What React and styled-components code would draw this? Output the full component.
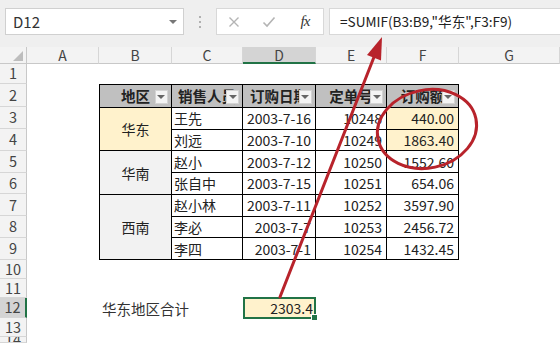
import React from 'react'
import styled, { createGlobalStyle } from 'styled-components'

const GlobalStyle = createGlobalStyle`
  html, body { margin: 0; padding: 0; background: #fff; }
  body {
    width: 560px;
    height: 343px;
    overflow: hidden;
    font-family: "Noto Sans CJK SC", "Open Sans", sans-serif;
  }
`

const GREEN = '#217346'
const RED = '#b8232b'

const Page = styled.div`
  position: relative;
  width: 560px;
  height: 343px;
  overflow: hidden;
  display: flex;
  flex-direction: column;
  background: #fff;
`

// ---------- formula bar ----------
const FormulaBar = styled.div`
  flex: none;
  height: 47px;
  box-sizing: border-box;
  display: flex;
  align-items: flex-start;
  padding: 8px 0 0 5px;
  background: #efefef;
`

const NameBox = styled.div`
  width: 179px;
  height: 27px;
  box-sizing: border-box;
  border: 1px solid #d0d0d0;
  background: #fff;
  display: flex;
  align-items: center;
  justify-content: space-between;
  padding: 0 6px 0 7px;
  font-size: 15px;
  color: #333;
`

const Caret = styled.span`
  width: 0;
  height: 0;
  border-left: 4px solid transparent;
  border-right: 4px solid transparent;
  border-top: 4px solid ${p => p.$color || '#777'};
`

const Dots = styled.div`
  width: 32px;
  height: 27px;
  display: flex;
  flex-direction: column;
  align-items: center;
  justify-content: center;
  gap: 3px;
  span {
    width: 2px;
    height: 2px;
    background: #b0b0b0;
  }
`

const ButtonBox = styled.div`
  width: 108px;
  height: 27px;
  box-sizing: border-box;
  border: 1px solid #d8d8d8;
  background: #fff;
  display: grid;
  grid-template-columns: 34px 35px 38px;
  align-items: center;
  justify-items: center;
`

const Fx = styled.span`
  font-family: "Liberation Serif", serif;
  font-style: italic;
  font-size: 15px;
  color: #333;
  letter-spacing: -1px;
`

const FormulaInput = styled.div`
  flex: 1;
  margin-left: 5px;
  height: 27px;
  box-sizing: border-box;
  border: 1px solid #d8d8d8;
  border-right: none;
  background: #fff;
  padding-left: 10px;
  font-size: 13.6px;
  line-height: 25px;
  color: #222;
  white-space: nowrap;
`

// ---------- sheet ----------
const Sheet = styled.div`
  flex: 1;
  display: grid;
  grid-template-columns: 27px 72px 73px 71px 73px 71px 72px 1fr;
  grid-template-rows: 17px 20px 23px repeat(7, 21.86px) 19px 19px 20px 19px 1fr;
  overflow: hidden;
`

const Corner = styled.div`
  grid-column: 1;
  grid-row: 1;
  background: #f3f3f3;
  border-right: 1px solid #c8c8c8;
  border-bottom: 1px solid #c8c8c8;
  display: flex;
  align-items: flex-end;
  justify-content: flex-end;
  padding: 0 3px 2px 0;
`

const ColHead = styled.div`
  grid-row: 1;
  box-sizing: border-box;
  background: ${p => (p.$active ? '#d4d4d4' : '#f3f3f3')};
  border-right: 1px solid #d6d6d6;
  border-bottom: ${p => (p.$active ? `2px solid ${GREEN}` : '1px solid #c8c8c8')};
  text-align: center;
  font-size: 14px;
  line-height: 16px;
  color: #444;
`

const RowHead = styled.div`
  grid-column: 1;
  box-sizing: border-box;
  overflow: hidden;
  background: ${p => (p.$active ? '#d4d4d4' : '#f3f3f3')};
  border-bottom: 1px solid #d6d6d6;
  border-right: ${p => (p.$active ? `2px solid ${GREEN}` : '1px solid #c8c8c8')};
  display: flex;
  align-items: center;
  justify-content: center;
  font-size: 14.5px;
  line-height: 1;
  color: #444;
`

const Table = styled.div`
  grid-column: 3 / 8;
  grid-row: 3 / 11;
  display: grid;
  grid-template-columns: 72fr 71fr 73fr 71fr 72fr;
  grid-template-rows: 22fr repeat(7, 20.86fr);
  gap: 1px;
  background: #000;
  border: 1px solid #000;
`

const HeadCell = styled.div`
  position: relative;
  overflow: hidden;
  background: #c0c0c0;
  display: flex;
  align-items: center;
  justify-content: center;
  font-size: 14.5px;
  font-weight: 700;
  color: #222;
  white-space: nowrap;
`

const FilterBtn = styled.span`
  position: absolute;
  right: 3px;
  top: 5px;
  width: 13px;
  height: 14px;
  box-sizing: border-box;
  background: #f4f4f4;
  border: 1px solid #d4d4d4;
  display: flex;
  align-items: center;
  justify-content: center;
`

const Cell = styled.div`
  grid-row: ${p => (p.$span ? `span ${p.$span}` : 'auto')};
  background: ${p => p.$bg || '#fff'};
  display: flex;
  align-items: center;
  justify-content: ${p =>
    p.$align === 'left' ? 'flex-start' : p.$align === 'center' ? 'center' : 'flex-end'};
  padding: ${p => (p.$align === 'left' ? '0 0 0 2px' : p.$align === 'center' ? '0' : '0 4px 0 0')};
  font-size: 14px;
  line-height: 1;
  color: #222;
  white-space: nowrap;
  overflow: hidden;
`

const Label = styled.div`
  grid-column: 3;
  grid-row: 13;
  display: flex;
  align-items: center;
  padding-left: 3px;
  font-size: 14.5px;
  color: #333;
  white-space: nowrap;
`

const Selected = styled.div`
  grid-column: 5;
  grid-row: 13;
  position: relative;
  margin: -1px 0 -1px 0;
  background: #fff2cc;
  border: 2px solid ${GREEN};
  display: flex;
  align-items: center;
  justify-content: flex-end;
  padding-right: 1px;
  font-size: 14px;
  line-height: 1;
  color: #222;
`

const Handle = styled.span`
  position: absolute;
  right: -4px;
  bottom: -4px;
  width: 5px;
  height: 5px;
  background: ${GREEN};
  border: 1px solid #fff;
`

const Overlay = styled.svg`
  position: absolute;
  left: 0;
  top: 0;
  pointer-events: none;
`

const cols = ['A', 'B', 'C', 'D', 'E', 'F', 'G']
const rows = [1, 2, 3, 4, 5, 6, 7, 8, 9, 10, 11, 12, 13, 14]

const YELLOW = '#fff2cc'
const GRAY = '#f2f2f2'

const Head = ({ children }) => (
  <HeadCell>
    {children}
    <FilterBtn>
      <Caret $color="#666" />
    </FilterBtn>
  </HeadCell>
)

export default function App() {
  return (
    <Page>
      <GlobalStyle />
      <FormulaBar>
        <NameBox>
          D12
          <Caret />
        </NameBox>
        <Dots>
          <span />
          <span />
          <span />
        </Dots>
        <ButtonBox>
          <svg width="12" height="12" viewBox="0 0 12 12">
            <path d="M1.5 1.5 L10.5 10.5 M10.5 1.5 L1.5 10.5" stroke="#b4b4b4" strokeWidth="1.4" fill="none" />
          </svg>
          <svg width="14" height="12" viewBox="0 0 14 12">
            <path d="M1.5 6.5 L5 10 L12.5 1.5" stroke="#b4b4b4" strokeWidth="1.6" fill="none" />
          </svg>
          <Fx>fx</Fx>
        </ButtonBox>
        <FormulaInput>=SUMIF(B3:B9,"华东",F3:F9)</FormulaInput>
      </FormulaBar>

      <Sheet>
        <Corner>
          <svg width="10" height="10" viewBox="0 0 10 10">
            <polygon points="10,0 10,10 0,10" fill="#bdbdbd" />
          </svg>
        </Corner>
        {cols.map(c => (
          <ColHead key={c} $active={c === 'D'}>
            {c}
          </ColHead>
        ))}
        {rows.map(r => (
          <RowHead key={r} $active={r === 12} style={{ gridRow: r + 1 }}>
            {r}
          </RowHead>
        ))}

        <Table>
          <Head>地区</Head>
          <Head>销售人员</Head>
          <Head>订购日期</Head>
          <Head>定单号</Head>
          <Head>订购额</Head>

          <Cell $span={2} $align="center" $bg={YELLOW}>华东</Cell>
          <Cell $align="left">王先</Cell>
          <Cell>2003-7-16</Cell>
          <Cell>10248</Cell>
          <Cell $bg={YELLOW}>440.00</Cell>

          <Cell $align="left">刘远</Cell>
          <Cell>2003-7-10</Cell>
          <Cell>10249</Cell>
          <Cell $bg={YELLOW}>1863.40</Cell>

          <Cell $span={2} $align="center" $bg={GRAY}>华南</Cell>
          <Cell $align="left">赵小</Cell>
          <Cell>2003-7-12</Cell>
          <Cell>10250</Cell>
          <Cell>1552.60</Cell>

          <Cell $align="left">张自中</Cell>
          <Cell>2003-7-15</Cell>
          <Cell>10251</Cell>
          <Cell>654.06</Cell>

          <Cell $span={3} $align="center" $bg={GRAY}>西南</Cell>
          <Cell $align="left">赵小林</Cell>
          <Cell>2003-7-11</Cell>
          <Cell>10252</Cell>
          <Cell>3597.90</Cell>

          <Cell $align="left">李必</Cell>
          <Cell>2003-7-7</Cell>
          <Cell>10253</Cell>
          <Cell>2456.72</Cell>

          <Cell $align="left">李四</Cell>
          <Cell>2003-7-1</Cell>
          <Cell>10254</Cell>
          <Cell>1432.45</Cell>
        </Table>

        <Label>华东地区合计</Label>
        <Selected>
          2303.4
          <Handle />
        </Selected>
      </Sheet>

      <Overlay width="560" height="343" viewBox="0 0 560 343">
        <ellipse
          cx="427"
          cy="129"
          rx="50"
          ry="39"
          transform="rotate(-12 427 129)"
          fill="none"
          stroke={RED}
          strokeWidth="3"
        />
        <line x1="280" y1="297" x2="374" y2="57" stroke={RED} strokeWidth="3" strokeLinecap="round" />
        <polygon points="382,37 381,60.5 367,55" fill={RED} />
      </Overlay>
    </Page>
  )
}
